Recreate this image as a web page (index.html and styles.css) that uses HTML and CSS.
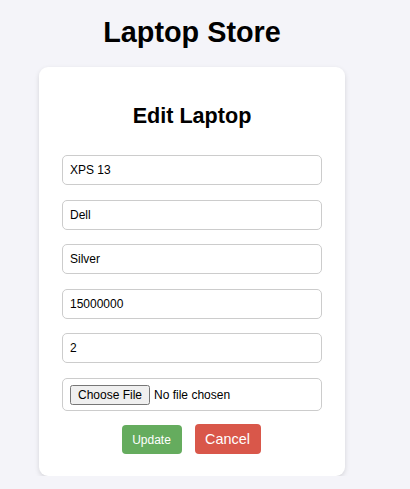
FILE: index.html
```html
<!DOCTYPE html>
<html>
<head>
<meta charset="utf-8">
<link rel="stylesheet" href="styles.css">
</head>
<body>
<div class="page">
  <h1 class="title">Laptop Store</h1>
  <div class="card">
    <h2 class="card-title">Edit Laptop</h2>
    <form class="form">
      <input class="field" type="text" value="XPS 13">
      <input class="field" type="text" value="Dell">
      <input class="field" type="text" value="Silver">
      <input class="field" type="text" value="15000000">
      <input class="field" type="text" value="2">
      <div class="file-field"><input class="file" type="file"></div>
      <div class="actions">
        <button class="btn btn-update" type="button">Update</button>
        <a class="btn btn-cancel" href="#">Cancel</a>
      </div>
    </form>
  </div>
</div>
</body>
</html>
```

FILE: styles.css
```css
html, body {
  margin: 0;
  padding: 0;
  background: #f4f4f9;
  font-family: "Liberation Sans", Arial, sans-serif;
}
.page {
  width: 384px;
  display: flex;
  flex-direction: column;
  align-items: center;
}
.title {
  margin: 15.5px 0 0;
  font-size: 28.8px;
  font-weight: bold;
  line-height: 33px;
  color: #000;
  text-align: center;
}
.card {
  margin-top: 18.5px;
  width: 306px;
  box-sizing: border-box;
  background: #fff;
  border-radius: 9px;
  box-shadow: 0 2px 5px rgba(0, 0, 0, 0.13);
  padding: 36px 0 22px;
}
.card-title {
  margin: 0;
  font-size: 21.6px;
  line-height: 25px;
  font-weight: bold;
  text-align: center;
  color: #000;
}
.form {
  margin-top: 27px;
  display: flex;
  flex-direction: column;
  align-items: center;
  gap: 14.6px;
}
.field {
  width: 260px;
  height: 30px;
  box-sizing: border-box;
  border: 1px solid #ccc;
  border-radius: 5px;
  padding: 0 7px;
  font-family: "Liberation Sans", Arial, sans-serif;
  font-size: 12px;
  color: #000;
  margin: 0;
  outline: none;
}
.file-field {
  width: 260px;
  height: 33.5px;
  box-sizing: border-box;
  border: 1px solid #ccc;
  border-radius: 5px;
  padding: 0 7px;
  display: flex;
  align-items: center;
}
.file {
  font-family: "Liberation Sans", Arial, sans-serif;
  font-size: 12px;
}
.actions {
  margin-top: -2px;
  margin-right: 2px;
  display: flex;
  align-items: center;
  justify-content: center;
  gap: 13px;
}
.btn {
  box-sizing: border-box;
  border: none;
  border-radius: 4px;
  color: #fff;
  font-family: "Liberation Sans", Arial, sans-serif;
  text-decoration: none;
  display: flex;
  align-items: center;
  justify-content: center;
}
.btn-update {
  width: 60px;
  height: 29px;
  background: #65ac5e;
  font-size: 12px;
  margin-top: 1px;
}
.btn-cancel {
  width: 66px;
  height: 30px;
  background: #d9574a;
  font-size: 14.4px;
}
```
